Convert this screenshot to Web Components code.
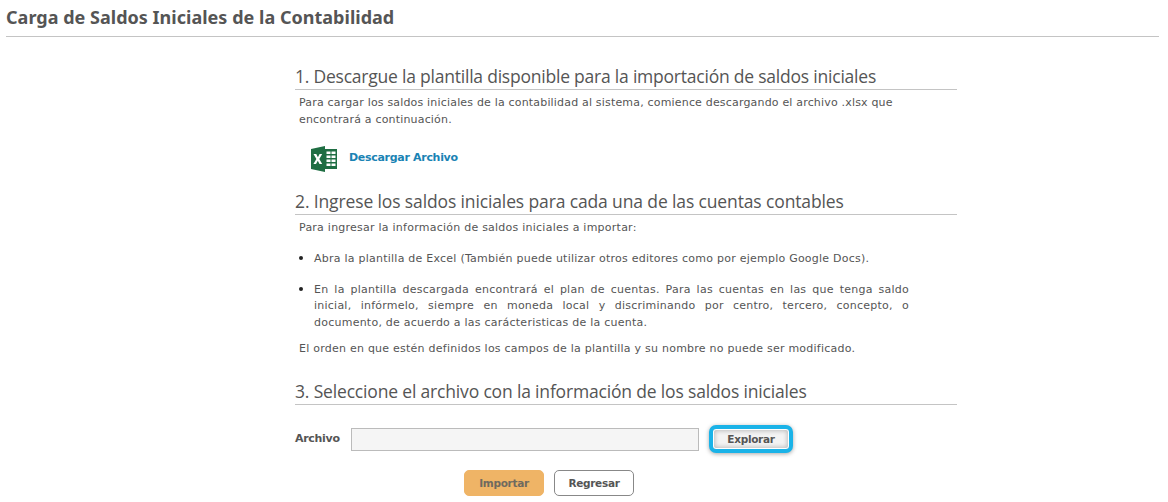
<!DOCTYPE html>
<html lang="es">
<head>
<meta charset="utf-8">
<title>Carga de Saldos Iniciales</title>
<style>
  html, body { margin: 0; background: #fff; }
  body { font-family: "DejaVu Sans", sans-serif; color: #555; }
  step-section li { margin-bottom: 13px; line-height: 16.500px; }
  step-section li:last-child { margin-bottom: 9px; }
  step-section li.just { text-align: justify; }
  step-section li::marker { font-size: 13px; color: #222; }
</style>
</head>
<body>
<page-title>Carga de Saldos Iniciales de la Contabilidad</page-title>
<import-panel>
  <step-section style="--track: -.22px" heading="1. Descargue la plantilla disponible para la importación de saldos iniciales">
    <p style="letter-spacing: .18px">Para cargar los saldos iniciales de la contabilidad al sistema, comience descargando el archivo .xlsx que encontrará a continuación.</p>
    <download-link>Descargar Archivo</download-link>
  </step-section>
  <step-section style="--track: -.13px; --after: 20px" heading="2. Ingrese los saldos iniciales para cada una de las cuentas contables">
    <p>Para ingresar la información de saldos iniciales a importar:</p>
    <ul>
      <li>Abra la plantilla de Excel (También puede utilizar otros editores como por ejemplo Google Docs).</li>
      <li class="just">En la plantilla descargada encontrará el plan de cuentas. Para las cuentas en las que tenga saldo inicial, infórmelo, siempre en moneda local y discriminando por centro, tercero, concepto, o documento, de acuerdo a las carácteristicas de la cuenta.</li>
    </ul>
    <p>El orden en que estén definidos los campos de la plantilla y su nombre no puede ser modificado.</p>
  </step-section>
  <step-section style="--track: -.17px" heading="3. Seleccione el archivo con la información de los saldos iniciales">
    <file-row></file-row>
  </step-section>
  <form-actions></form-actions>
</import-panel>

<script>
  const define = (name, html) => {
    customElements.define(name, class extends HTMLElement {
      constructor() {
        super();
        this.attachShadow({ mode: 'open' }).innerHTML = html;
      }
      connectedCallback() {
        const h = this.shadowRoot.getElementById('heading');
        if (h) h.textContent = this.getAttribute('heading');
      }
    });
  };

  define('page-title', `
    <style>
      :host { display: block; margin: 0 9px 0 6px; height: 36px; border-bottom: 1px solid #c4c4c4; }
      h1 { margin: 0; padding-top: 5px; font: 700 18px/24px "Noto Sans", sans-serif; letter-spacing: .02px; color: #555; white-space: nowrap; }
    </style>
    <h1><slot></slot></h1>`);

  define('import-panel', `
    <style>
      :host { display: block; margin: 25px 0 0 295px; width: 662px; }
    </style>
    <slot></slot>`);

  define('step-section', `
    <style>
      :host { display: block; font: 11px/17px "DejaVu Sans", sans-serif; color: #555; letter-spacing: .24px; margin-bottom: var(--after, 0); }
      h2 { margin: 0; height: 27px; border-bottom: 1px solid #c4c4c4; font: 17.500px/28px "Open Sans", sans-serif; color: #555; letter-spacing: var(--track); white-space: nowrap; }
      ::slotted(p) { margin: 4px 4px 0 4px; }
      ::slotted(ul) { margin: 14px 48px 0 4px; padding: 0 0 0 15px; }
    </style>
    <h2 id="heading"></h2>
    <slot></slot>`);

  define('download-link', `
    <style>
      :host { display: flex; align-items: center; gap: 12px; margin: 18px 0 15px 16px; height: 26px; }
      a { margin-top: -4px; font: bold 11px/17px "DejaVu Sans", sans-serif; letter-spacing: -0.3px; color: #1a83b4; text-decoration: none; }
      svg { display: block; }
    </style>
    <svg width="26" height="26" viewBox="0 0 26 26">
      <path d="M0 3 14 0V26L0 23Z" fill="#1f6e43"/>
      <path d="M14 3H26V23H14Z" fill="#1f6e43"/>
      <path d="M15.500 5.500h4v2.500h-4zM20.500 5.500h4v2.500h-4zM15.500 9.500h4v2.500h-4zM20.500 9.500h4v2.500h-4zM15.500 13.500h4v2.500h-4zM20.500 13.500h4v2.500h-4zM15.500 17.500h4v2.500h-4zM20.500 17.500h4v2.500h-4z" fill="#fff"/>
      <path d="M2.500 8h2.800l1.600 3.300L8.600 8h2.600l-2.900 5 2.900 5H8.500l-1.700-3.300L5 18H2.400l3-5z" fill="#fff"/>
    </svg>
    <a href="#"><slot></slot></a>`);

  define('file-row', `
    <style>
      :host { display: flex; align-items: center; margin-top: 20px; height: 28px; }
      label { width: 56px; margin-top: -2px; font: bold 11px/17px "DejaVu Sans", sans-serif; letter-spacing: -0.3px; color: #555; }
      .box { width: 346px; height: 21px; border: 1px solid #bbb; background: #f5f5f5; }
      button { margin-left: 10px; width: 84px; height: 28px; box-sizing: border-box; background: #f3f3f3; border: 4px solid #1ab3e8; border-radius: 7px; box-shadow: 0 1px 4px rgba(0,0,0,.35), inset 0 0 0 1px #fff, inset 0 0 4px 2px rgba(0,0,0,.22); font: bold 10.500px "DejaVu Sans", sans-serif; letter-spacing: -0.3px; color: #555; padding: 0; }
    </style>
    <label>Archivo</label>
    <div class="box"></div>
    <button type="button">Explorar</button>`);

  define('form-actions', `
    <style>
      :host { display: flex; gap: 10px; margin: 17px 0 0 169px; }
      button { width: 80px; height: 26px; box-sizing: border-box; border-radius: 5px; font: bold 10.500px "DejaVu Sans", sans-serif; letter-spacing: -0.3px; color: #555; padding: 0; }
      .primary { background: #efb466; border: 1px solid #efb466; color: #6f6a5f; }
      .plain { background: #fff; border: 1px solid #888; }
    </style>
    <button class="primary" type="button">Importar</button>
    <button class="plain" type="button">Regresar</button>`);
</script>
</body>
</html>
